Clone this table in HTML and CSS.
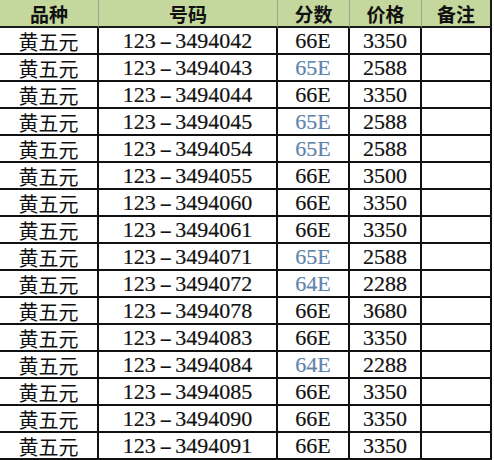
FILE: index.html
```html
<!DOCTYPE html>
<html lang="zh-CN">
<head>
<meta charset="utf-8">
<title>号码表</title>
<link rel="stylesheet" href="styles.css">
</head>
<body>
<div class="sheet">
  <div class="h c1">品种</div><div class="h">号码</div><div class="h">分数</div><div class="h">价格</div><div class="h">备注</div>

  <div class="d cn">黄五元</div><div class="d num">123<span class="dash">-</span>3494042</div><div class="d num">66E</div><div class="d num">3350</div><div class="d"></div>
  <div class="d cn">黄五元</div><div class="d num">123<span class="dash">-</span>3494043</div><div class="d num blue">65E</div><div class="d num">2588</div><div class="d"></div>
  <div class="d cn">黄五元</div><div class="d num">123<span class="dash">-</span>3494044</div><div class="d num">66E</div><div class="d num">3350</div><div class="d"></div>
  <div class="d cn">黄五元</div><div class="d num">123<span class="dash">-</span>3494045</div><div class="d num blue">65E</div><div class="d num">2588</div><div class="d"></div>
  <div class="d cn">黄五元</div><div class="d num">123<span class="dash">-</span>3494054</div><div class="d num blue">65E</div><div class="d num">2588</div><div class="d"></div>
  <div class="d cn">黄五元</div><div class="d num">123<span class="dash">-</span>3494055</div><div class="d num">66E</div><div class="d num">3500</div><div class="d"></div>
  <div class="d cn">黄五元</div><div class="d num">123<span class="dash">-</span>3494060</div><div class="d num">66E</div><div class="d num">3350</div><div class="d"></div>
  <div class="d cn">黄五元</div><div class="d num">123<span class="dash">-</span>3494061</div><div class="d num">66E</div><div class="d num">3350</div><div class="d"></div>
  <div class="d cn">黄五元</div><div class="d num">123<span class="dash">-</span>3494071</div><div class="d num blue">65E</div><div class="d num">2588</div><div class="d"></div>
  <div class="d cn">黄五元</div><div class="d num">123<span class="dash">-</span>3494072</div><div class="d num blue">64E</div><div class="d num">2288</div><div class="d"></div>
  <div class="d cn">黄五元</div><div class="d num">123<span class="dash">-</span>3494078</div><div class="d num">66E</div><div class="d num">3680</div><div class="d"></div>
  <div class="d cn">黄五元</div><div class="d num">123<span class="dash">-</span>3494083</div><div class="d num">66E</div><div class="d num">3350</div><div class="d"></div>
  <div class="d cn">黄五元</div><div class="d num">123<span class="dash">-</span>3494084</div><div class="d num blue">64E</div><div class="d num">2288</div><div class="d"></div>
  <div class="d cn">黄五元</div><div class="d num">123<span class="dash">-</span>3494085</div><div class="d num">66E</div><div class="d num">3350</div><div class="d"></div>
  <div class="d cn">黄五元</div><div class="d num">123<span class="dash">-</span>3494090</div><div class="d num">66E</div><div class="d num">3350</div><div class="d"></div>
  <div class="d cn">黄五元</div><div class="d num">123<span class="dash">-</span>3494091</div><div class="d num">66E</div><div class="d num">3350</div><div class="d"></div>
</div>
</body>
</html>
```
FILE: styles.css
```css
html, body {
  margin: 0;
  padding: 0;
  background: #ffffff;
}

.sheet {
  display: grid;
  grid-template-columns: 99px 179px 72px 72px 70px;
  grid-template-rows: 28px repeat(16, 27px);
  width: 492px;
}

.h, .d {
  box-sizing: border-box;
  display: flex;
  align-items: center;
  justify-content: center;
  color: #111111;
  white-space: nowrap;
}

.h {
  background: #c4d79d;
  border-right: 1px solid #9aa88a;
  border-bottom: 2px solid #1a1a1a;
  font-family: "Noto Sans CJK SC", "Noto Sans", sans-serif;
  font-weight: 700;
  font-size: 19px;
  padding-top: 1px;
}

.h:nth-child(5) {
  border-right: 2px solid #1a1a1a;
}

.d {
  border-right: 2px solid #111111;
  border-bottom: 2px solid #111111;
  padding-top: 1px;
}

.cn {
  font-family: "Noto Sans CJK SC", sans-serif;
  font-size: 20px;
  font-weight: 400;
}

.num {
  font-family: "Liberation Serif", "Times New Roman", serif;
  font-size: 22px;
  -webkit-text-stroke: 0.2px currentColor;
}

.dash {
  display: inline-block;
  margin: 0 6px;
  transform: scaleX(1.7);
}

.blue {
  color: #5f84ac;
}
```
